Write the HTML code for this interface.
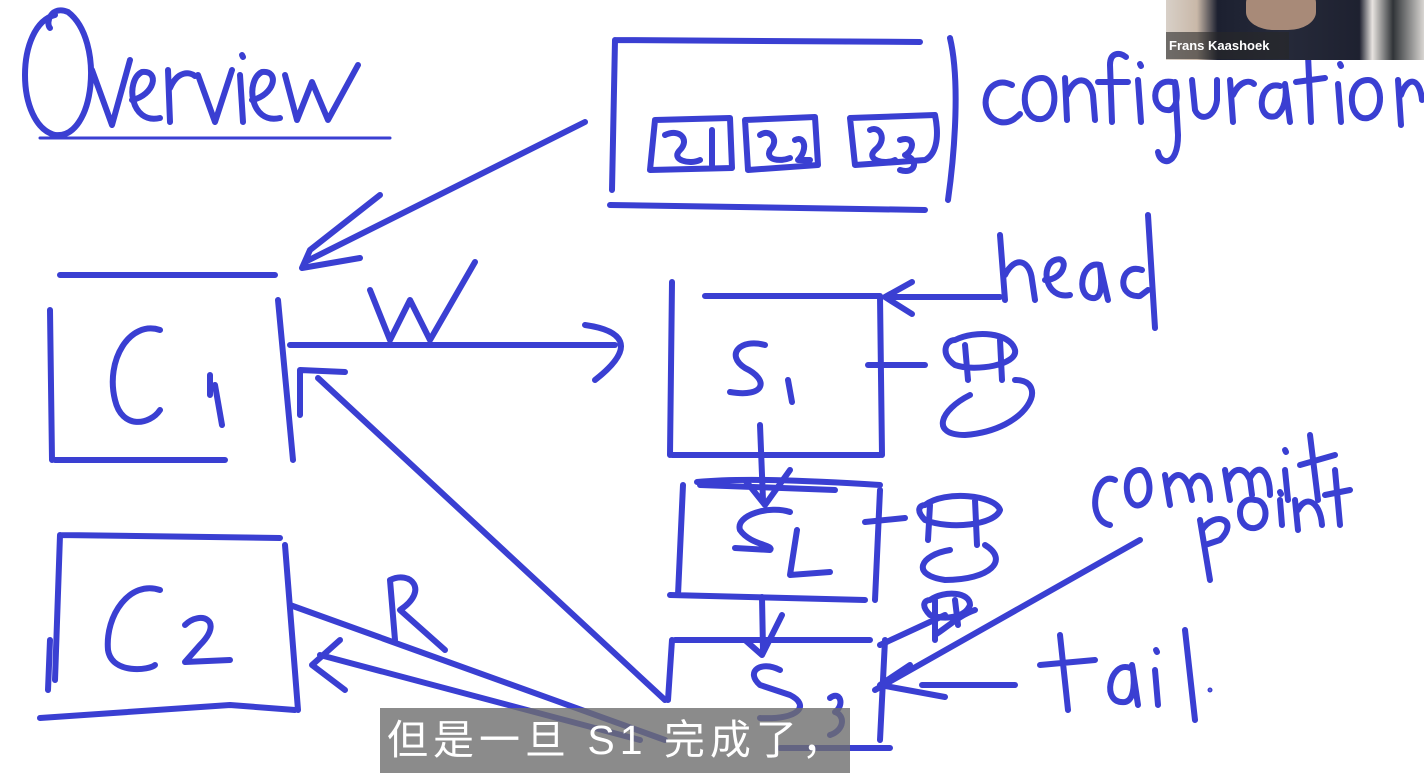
<!DOCTYPE html>
<html><head><meta charset="utf-8"><style>
html,body{margin:0;padding:0;background:#fff;width:1424px;height:773px;overflow:hidden;position:relative}
svg{position:absolute;left:0;top:0}
.cam{position:absolute;left:1166px;top:0;width:258px;height:60px;background:linear-gradient(90deg,#d8d0c8 0%,#c9b8a8 12%,#1c2030 20%,#262a3a 45%,#1e2130 75%,#e8e4e0 80%,#303438 88%,#d9d6d2 100%);overflow:hidden}
.face{position:absolute;left:80px;top:-15px;width:70px;height:45px;border-radius:40%;background:#a88a78}
.cam .name{position:absolute;left:0;top:32px;height:27px;width:120px;background:rgba(40,40,40,.6);color:#fff;font:bold 13px "Liberation Sans",sans-serif;line-height:27px;padding-left:3px}
.sub{position:absolute;left:380px;top:708px;width:470px;height:65px;background:rgba(110,110,110,.8);color:#fff;font:41px "Liberation Sans","Noto Sans CJK SC",sans-serif;line-height:65px;padding-left:7px;box-sizing:border-box;white-space:nowrap;letter-spacing:5px}
</style></head><body>
<svg width="1424" height="773" viewBox="0 0 1424 773" fill="none" stroke="#3a3fd2" stroke-width="6" stroke-linecap="round" stroke-linejoin="round">
<path d="M55 15 C15 25 15 125 55 135 C95 140 105 40 68 12 C52 5 45 22 50 28"/>
<path d="M92 70 L112 125 L130 60"/>
<path d="M132 100 C155 95 160 70 142 72 C125 80 130 125 160 118"/>
<path d="M168 70 L170 122 M170 88 C178 70 190 72 195 76"/>
<path d="M198 75 L215 122 L232 70"/>
<path d="M240 75 L243 122 M242 55 L243 57"/>
<path d="M252 100 C275 95 280 70 262 72 C245 80 250 125 280 118"/>
<path d="M285 75 L297 120 L312 82 L328 120 L358 65"/>
<path d="M40 138 L390 138" stroke-width="3"/>
<path d="M615 40 L920 42 M615 40 L612 190 M610 205 L925 210 M950 38 C960 80 955 150 948 200"/>
<path d="M655 120 L730 118 L732 168 L650 170 Z M665 135 C680 128 690 140 680 150 C670 160 690 165 700 160 M712 130 L712 165"/>
<path d="M745 120 L815 117 L818 165 L748 170 Z M760 135 C770 128 780 140 770 150 C765 160 780 162 790 158 M795 140 C805 135 808 150 798 160 L810 160"/>
<path d="M850 118 L935 115 C940 140 935 155 925 160 L855 165 Z M870 130 C880 125 888 140 875 150 C865 160 885 165 895 160 M900 140 C915 135 915 150 905 155 C920 160 915 175 900 170"/>
<path d="M1012 85 C985 72 975 115 1000 122 C1010 124 1016 118 1020 114"/>
<path d="M1042 78 C1018 78 1020 122 1042 119 C1060 115 1057 78 1042 78"/>
<path d="M1065 78 L1067 120 M1067 95 C1074 75 1090 76 1093 95 L1095 120"/>
<path d="M1112 122 L1110 65 C1110 52 1120 52 1126 57 M1098 82 L1128 82"/>
<path d="M1138 80 L1141 122 M1140 64 L1141 66"/>
<path d="M1172 82 C1150 78 1150 112 1170 110 C1178 106 1178 95 1175 82 L1178 135 C1178 168 1160 165 1158 152"/>
<path d="M1192 80 L1195 110 C1200 122 1215 118 1217 100 L1217 80"/>
<path d="M1230 80 L1233 122 M1233 95 C1240 80 1250 80 1254 84"/>
<path d="M1280 86 C1258 80 1255 122 1276 116 C1285 110 1287 95 1285 84 L1290 122"/>
<path d="M1308 55 L1311 122 M1296 82 L1325 78"/>
<path d="M1338 84 L1341 122 M1340 64 L1341 66"/>
<path d="M1368 80 C1345 80 1348 122 1368 118 C1385 114 1383 80 1368 80"/>
<path d="M1398 80 L1401 125 M1401 95 C1408 75 1420 78 1422 100"/>
<path d="M585 122 L305 262 M380 195 L310 250 L302 268 L360 258"/>
<path d="M60 275 L275 275 M50 310 L52 460 M55 460 L225 460 M278 300 L293 460"/>
<path d="M160 330 C130 320 105 360 115 400 C122 430 150 425 160 410"/>
<path d="M210 375 L210 395 M215 385 L222 425"/>
<path d="M290 345 L615 345 M585 325 C620 330 640 345 595 380"/>
<path d="M370 290 L390 340 L410 300 L430 340 L475 262"/>
<path d="M665 700 L318 378 M300 415 L300 370 L345 372"/>
<path d="M705 296 L880 296 M672 282 L670 455 M672 455 L880 455 M880 296 L882 455"/>
<path d="M765 345 C740 338 725 355 745 368 C770 380 765 398 730 392 M788 380 L792 402"/>
<path d="M885 297 L1000 297 M912 282 L885 297 L912 314"/>
<path d="M868 365 L925 365"/>
<path d="M955 340 C975 330 1010 332 1015 350 C1018 365 975 372 955 365 C940 355 945 340 955 340 M965 345 L968 380 M1000 340 L1002 380 M1015 380 C1050 380 1030 430 965 435 C930 435 940 410 970 395"/>
<path d="M1000 235 L1005 300 M1005 275 C1015 255 1030 260 1032 280 L1035 300"/>
<path d="M1045 280 C1065 280 1070 255 1055 260 C1040 265 1045 300 1070 295"/>
<path d="M1100 265 C1080 260 1075 300 1095 298 C1105 295 1100 270 1100 265 L1108 300"/>
<path d="M1142 270 C1120 262 1115 298 1140 296 L1148 290 M1148 215 L1155 328"/>
<path d="M760 425 L763 500 M745 480 L765 505 L790 470"/>
<path d="M697 482 C740 478 800 480 880 485 M683 485 L678 595 M670 595 L865 600 M880 490 L875 600 M700 485 L835 490"/>
<path d="M790 512 C770 505 735 515 740 530 C750 545 775 545 770 550 L735 548"/>
<path d="M797 530 L790 575 L830 572"/>
<path d="M865 522 L905 518"/>
<path d="M925 505 C945 490 995 495 1000 510 C995 525 950 530 925 520 C915 510 920 505 925 505 M930 505 L928 540 M975 500 L977 545 M985 545 C1010 560 990 580 945 580 C910 575 920 555 950 550"/>
<path d="M762 597 L763 650 M745 640 L762 655 L782 615"/>
<path d="M675 640 L870 640 M672 640 L668 700 M885 640 L880 740 M780 748 L890 748"/>
<path d="M780 670 C760 660 745 672 760 685 L790 695 C810 705 800 720 760 718 M830 698 C840 690 845 705 835 712 C845 715 845 730 830 735"/>
<path d="M930 600 C945 590 970 592 970 605 C965 618 945 620 930 615 C920 605 925 600 930 600 M935 600 L935 640 M955 600 L958 625 M935 635 C950 625 960 615 975 610"/>
<path d="M290 605 L665 740 M320 655 L640 740 M340 640 L312 665 L345 690"/>
<path d="M395 640 L390 580 C410 570 430 590 400 610 L445 650"/>
<path d="M60 535 L280 538 M60 535 L55 680 M50 640 L48 690 M40 718 L230 705 L295 710 M285 545 L298 710"/>
<path d="M160 590 C130 580 105 615 108 650 C112 675 150 670 155 665"/>
<path d="M185 625 C200 610 225 620 200 645 L185 662 L230 660"/>
<path d="M1140 540 L875 690 M880 645 L945 615 M910 665 L880 685 L945 697"/>
<path d="M1115 480 C1095 470 1085 520 1110 525"/>
<path d="M1140 470 C1120 470 1125 510 1140 505 C1155 500 1150 470 1140 470"/>
<path d="M1165 475 L1170 505 M1168 485 C1175 470 1185 472 1190 490 L1192 500 M1190 485 C1195 470 1210 472 1210 500"/>
<path d="M1225 470 L1230 500 M1228 480 C1235 465 1245 468 1250 480 L1252 495 M1250 478 C1258 462 1270 470 1270 495"/>
<path d="M1285 470 L1288 500 M1285 450 L1286 452"/>
<path d="M1310 435 L1318 500 M1300 465 L1335 455"/>
<path d="M1200 520 L1210 580 M1202 530 C1215 510 1240 520 1220 540 L1205 545"/>
<path d="M1255 500 C1235 495 1235 530 1255 528 C1270 525 1268 500 1255 500"/>
<path d="M1280 500 L1282 525 M1280 492 L1281 494"/>
<path d="M1295 500 L1298 530 M1298 510 C1305 495 1320 500 1322 525"/>
<path d="M1335 470 L1340 525 M1325 495 L1350 490"/>
<path d="M922 685 L1015 685"/>
<path d="M1060 635 L1068 710 M1040 665 L1095 660"/>
<path d="M1130 668 C1110 660 1100 705 1125 702 C1135 700 1135 680 1132 665 L1138 705"/>
<path d="M1155 670 L1158 705 M1156 650 L1157 652"/>
<path d="M1185 630 L1195 720"/>
<circle cx="1210" cy="690" r="1" stroke-width="3"/>
</svg>
<div class="cam"><div class="face"></div><div class="name">Frans Kaashoek</div></div>
<div class="sub">但是一旦 S1 完成了，</div>
</body></html>
